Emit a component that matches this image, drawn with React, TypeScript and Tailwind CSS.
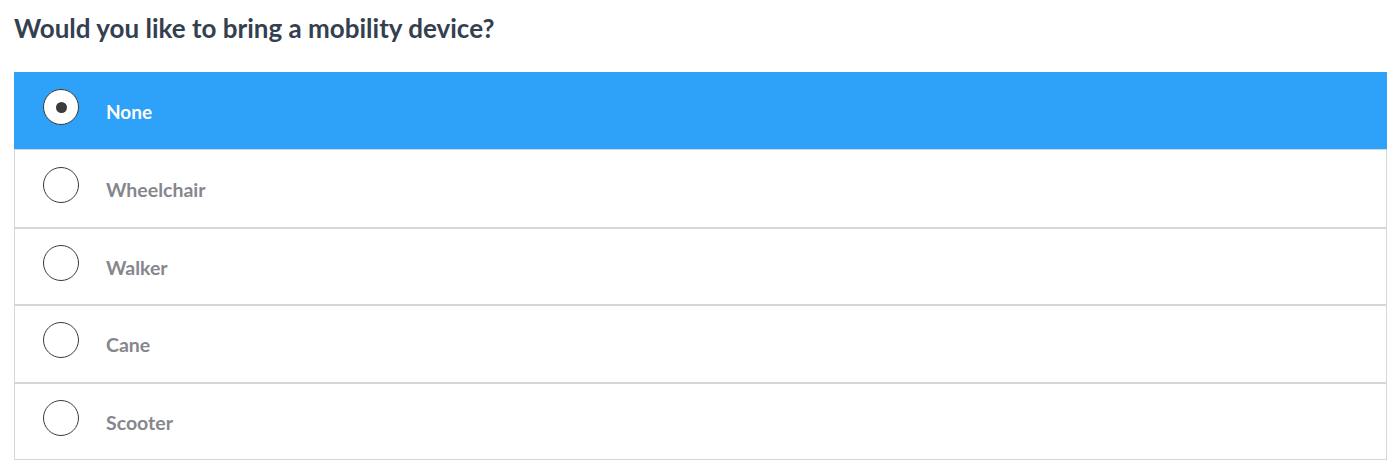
import React from "react";

const options = ["None", "Wheelchair", "Walker", "Cane", "Scooter"];

export default function App() {
  const selected = 0;
  return (
    <div className="bg-white w-[1399px] h-[474px] px-[14px] pt-[13px]" style={{ fontFamily: "Lato, 'Noto Sans', sans-serif" }}>
      <h1 className="text-[26px] leading-[30px] font-bold text-[#343f50] m-0">Would you like to bring a mobility device?</h1>
      <div className="mt-[29px] w-[1373px] flex flex-col">
        {options.map((o, i) => {
          const sel = i === selected;
          return (
            <div
              key={o}
              className={
                sel
                  ? "h-[78px] flex items-center bg-[#2ea1f8] border-b border-[#d3d6db]"
                  : "h-[77.5px] flex items-center bg-white border-l border-r border-b border-[#d3d6db]" + (i > 1 ? " border-t" : "")
              }
            >
              <div className={sel ? "ml-[29px] mb-[7px] w-[36px] h-[36px] rounded-full bg-white border border-[#3a3a3a] flex items-center justify-center" : "ml-[28px] mb-[7px] w-[36px] h-[36px] rounded-full bg-white border border-[#3a3a3a]"}>
                {sel && <div className="w-[11px] h-[11px] rounded-full bg-[#3b3b3b]" />}
              </div>
              <span className={sel ? "ml-[27px] mt-[3px] text-[19px] font-bold text-white" : "ml-[27px] mt-[2px] text-[19.5px] font-bold text-[#86878d]"}>{o}</span>
            </div>
          );
        })}
      </div>
    </div>
  );
}
